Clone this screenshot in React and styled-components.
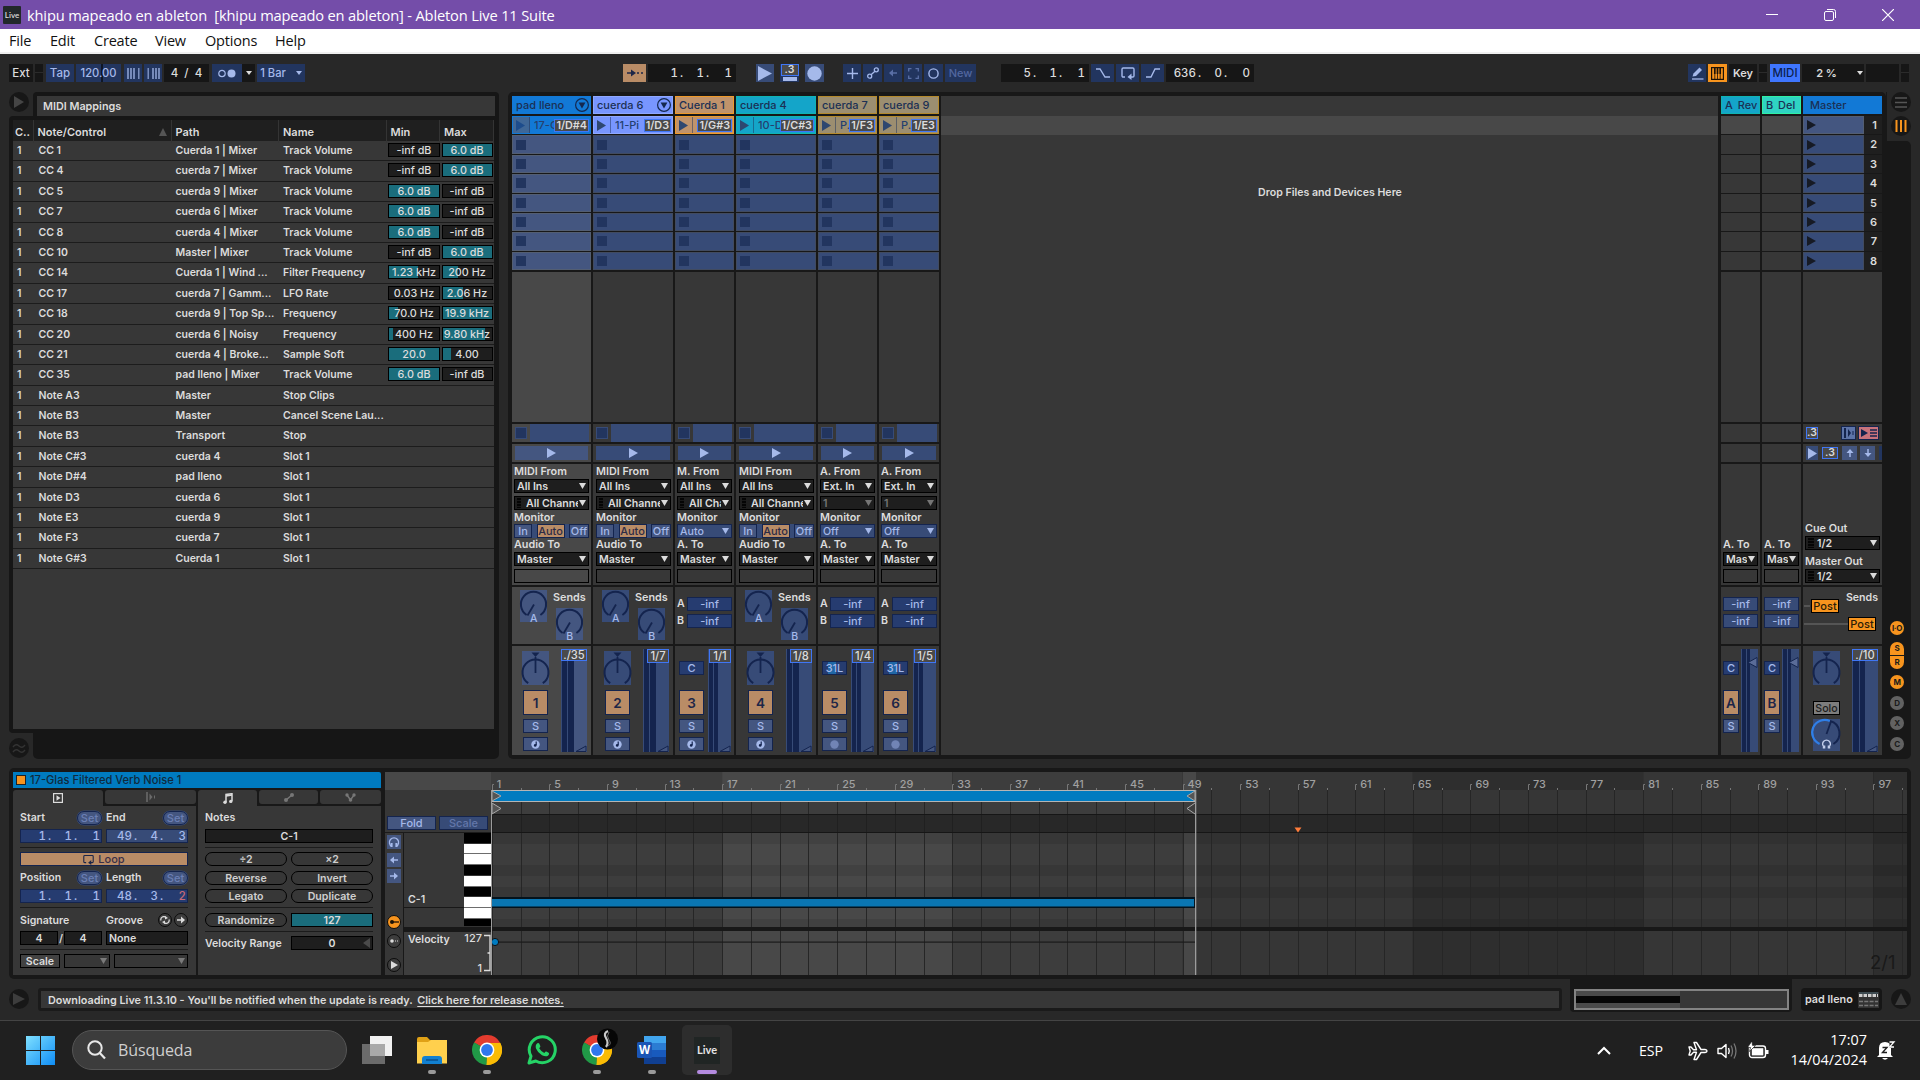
import React from "react";
import styled, { createGlobalStyle, css } from "styled-components";

const c = {
  bg: "#282828",
  dark: "#181818",
  panel: "#373737",
  panelSel: "#484848",
  field: "#1e1e1e",
  text: "#dcdcdc",
  navy: "#22355f",
  navyLine: "#14244e",
  blue: "#374b77",
  blueSel: "#445680",
  blueText: "#a5b9ea",
  link: "#3f76f5",
  tan: "#b98c66",
  teal: "#1a6d7c",
  orange: "#f7941e",
};

const Global = createGlobalStyle`
  * { box-sizing: border-box; }
  body { margin: 0; background: ${c.bg}; overflow: hidden; }
  svg { display: block; flex: none; }
`;

const App_ = styled.div`
  width: 1920px;
  height: 1080px;
  display: flex;
  flex-direction: column;
  background: ${c.bg};
  color: ${c.text};
  font: 600 10.6px/14px Inter, "Noto Sans", sans-serif;
  letter-spacing: 0;
  white-space: nowrap;
  overflow: hidden;
`;

/* ---------- window chrome ---------- */
const TitleBar = styled.header`
  height: 29px;
  flex: none;
  display: flex;
  align-items: center;
  background: #744da9;
  color: #fff;
  font: 400 14.66px/20px "Open Sans", "Noto Sans", sans-serif;
  letter-spacing: -0.16px;
  white-space: pre;
`;
const LiveBadge = styled.span`
  width: 18px;
  height: 18px;
  margin: 0 6px 0 3px;
  border-radius: 1px;
  background: #22282a;
  color: #ddd;
  font: 600 8px/18px Lato, sans-serif;
  text-align: center;
  letter-spacing: 0;
`;
const Caption = styled.span`
  width: 536px;
`;
const WindowButtons = styled.div`
  display: flex;
  margin-left: auto;
  padding-right: 26px;
  gap: 46px;
`;
const MenuBar = styled.nav`
  height: 25px;
  flex: none;
  display: flex;
  align-items: center;
  padding: 1px 0 0 9px;
  background: #fff;
  border-bottom: 2px solid #efefef;
  color: #111;
  font: 400 14.5px/20px "Open Sans", "Noto Sans", sans-serif;
  letter-spacing: -0.2px;
`;
const MenuItem = styled.span`
  width: ${(p) => p.$w}px;
`;

/* ---------- toolbar ---------- */
const Toolbar = styled.div`
  height: 18px;
  flex: none;
  display: flex;
  margin: 10px 0 10px 9px;
`;
const Cell = styled.div`
  width: ${(p) => p.$w}px;
  height: 18px;
  margin-left: ${(p) => p.$ml ?? 2}px;
  flex: none;
  display: flex;
  align-items: center;
  justify-content: center;
  background: ${(p) => p.$bg || "#161616"};
  color: ${(p) => p.$fg || c.text};
  font-weight: ${(p) => p.$weight || 500};
  font-size: ${(p) => p.$size || 11.5}px;
`;
const SplitCell = styled(Cell)`
  background: linear-gradient(#161616 8px, #2b2b2b 8px, #2b2b2b 9px, #161616 9px);
`;
const Tempo = styled(Cell)`
  background: linear-gradient(90deg, ${c.navy} 25px, #0f1726 25px, #0f1726 27px, ${c.navy} 27px);
`;
const Digits = styled.span`
  display: flex;
  justify-content: flex-end;
  gap: 2px;
  i { width: 4px; font-style: normal; text-align: left; }
`;
const Position = styled(Cell)`
  display: grid;
  grid-template-columns: 1fr 26px 22px;
  padding-right: 4px;
  font-variant-numeric: tabular-nums;
`;
const Counter = styled.span`
  border: 1.5px solid ${c.link};
  background: #4a4a4a;
  color: ${c.text};
  font-size: 10.5px;
  font-weight: 600;
  line-height: 10px;
  width: ${(p) => p.$w || 18}px;
  height: ${(p) => p.$h || 12}px;
  text-align: center;
  overflow: hidden;
`;
const CountCell = styled(Cell)`
  flex-direction: column;
  justify-content: flex-start;
  &::after {
    content: "";
    width: 14px;
    height: 4px;
    margin-top: 1px;
    background: ${c.blueText};
  }
`;

/* ---------- main area ---------- */
const Main = styled.div`
  height: 667px;
  flex: none;
  display: flex;
  gap: 9px;
  padding-left: 9px;
`;
const Browser = styled.section`
  width: 490px;
  display: flex;
  flex-direction: column;
`;
const BrowserTop = styled.div`
  height: 24px;
  display: flex;
  justify-content: space-between;
`;
const BrowserTitle = styled.div`
  width: 466px;
  padding: 4px 4px 0;
  background: #161616;
  border-radius: 4px 4px 0 0;
  div {
    height: 20px;
    padding-left: 6px;
    background: ${c.panel};
    font-size: 10.8px;
    line-height: 21px;
  }
`;
const TableFrame = styled.div`
  height: 617px;
  padding: 4px 5px 4px 4px;
  background: #161616;
  border-radius: 4px 0 0 4px;
`;
const Table = styled.div`
  height: 100%;
  background: ${c.panel};
`;
const gridCols = css`
  display: grid;
  grid-template-columns: 20.5px 138px 107.5px 107.5px 53.5px 54px;
`;
const HeadRow = styled.div`
  ${gridCols}
  height: 21px;
  background: #1f1f1f;
  line-height: 22px;
  font-size: 11px;
  span {
    padding: 1px 0 0 4px;
    border-right: 1px solid #343434;
    display: flex;
    align-items: center;
    justify-content: space-between;
  }
  span:first-child { padding-left: 2px; }
`;
const Row = styled.div`
  ${gridCols}
  height: 20.4px;
  border-bottom: 1px solid #1c1c1c;
  line-height: 20.4px;
  font-size: 10.5px;
  > span {
    padding-left: 4px;
    overflow: hidden;
  }
  > span:nth-child(2) { padding-left: 5px; }
`;
const Value = styled.div`
  width: ${(p) => p.$w || 52}px;
  height: 14px;
  margin: 2px 0 0 1.5px;
  border: 1px solid #000;
  text-align: center;
  line-height: 13.5px;
  font-weight: 500;
  font-size: 10.8px;
  background: linear-gradient(90deg, ${c.teal} ${(p) => p.$fill}%, ${c.field} ${(p) => p.$fill}%);
`;
const BrowserBottom = styled.div`
  height: 26px;
  display: flex;
  justify-content: space-between;
  align-items: flex-start;
`;
const PreviewBar = styled.div`
  width: 466px;
  height: 26px;
  background: #161616;
  border-radius: 0 0 5px 5px;
`;
const Round = styled.span`
  width: 20px;
  height: 20px;
  margin-top: ${(p) => p.$mt || 0}px;
  display: flex;
  align-items: center;
  justify-content: center;
  border-radius: 50%;
  background: #171717;
`;

/* ---------- session ---------- */
const Session = styled.section`
  display: flex;
`;
const Tracks = styled.div`
  width: 1378px;
  display: flex;
  gap: 2px;
  padding: 4px 4px 0;
  background: ${c.dark};
  border-radius: 5px 5px 0 5px;
`;
const Column = styled.div`
  width: ${(p) => p.$w}px;
  flex: none;
  display: flex;
  flex-direction: column;
  gap: 2px;
  margin-left: ${(p) => p.$ml || 0}px;
`;
const TrackHead = styled.div`
  height: 18px;
  flex: none;
  display: flex;
  align-items: center;
  justify-content: space-between;
  padding: 0 0 0 3px;
  background: ${(p) => p.$bg};
  border: 1px solid ${(p) => p.$line || p.$bg};
  color: #1b3054;
  font-weight: 500;
  font-size: 11px;
`;
const Slots = styled.div`
  height: 154px;
  flex: none;
  display: grid;
  grid-template-rows: repeat(8, minmax(0, 1fr));
  gap: 1px;
`;
const Slot = styled.div`
  display: flex;
  align-items: center;
  padding-left: 3px;
  border: 1px solid ${(p) => (p.$sel ? "#535e72" : "#414b60")};
  background: ${(p) => (p.$sel ? c.blueSel : c.blue)};
  &::before {
    content: "";
    width: 10px;
    height: 10px;
    background: ${c.navy};
  }
`;
const Clip = styled.div`
  display: flex;
  overflow: hidden;
  background: ${(p) => p.$bg};
  border: 1px solid ${(p) => p.$line || p.$bg};
  color: #24406f;
  font-weight: 500;
  font-size: 11px;
  line-height: 17px;
`;
const ClipPlay = styled.span`
  width: 17px;
  flex: none;
  display: flex;
  align-items: center;
  padding-left: 3px;
  margin-right: ${(p) => p.$mr}px;
  background: ${(p) => p.$bg};
  border-right: 1px solid rgba(30, 50, 90, 0.5);
`;
const ClipName = styled.span`
  flex: 1;
  min-width: 0;
  overflow: hidden;
`;
const NoteBadge = styled.span`
  flex: none;
  height: 13px;
  margin: 2px 1px 0 0;
  padding: 0 1px;
  border: 1px solid ${c.link};
  background: #4a4a4a;
  color: ${c.text};
  font-weight: 600;
  font-size: 10.8px;
  line-height: 11px;
`;
const ReturnSlot = styled.div`
  background: ${(p) => (p.$hi ? c.panelSel : c.panel)};
`;
const SceneSlot = styled.div`
  display: flex;
  justify-content: space-between;
  background: #1f1f1f;
  font-size: 11px;
  line-height: 19px;
  padding-right: 5px;
`;
const SceneName = styled.div`
  width: 61px;
  display: flex;
  align-items: center;
  padding-left: 3px;
  border: 1px solid ${(p) => (p.$sel ? "#535e72" : "#414b60")};
  background: ${(p) => (p.$sel ? c.blueSel : c.blue)};
`;
const Section = styled.div`
  height: ${(p) => p.$h}px;
  flex: none;
  background: ${(p) => (p.$sel ? c.panelSel : c.panel)};
  overflow: hidden;
`;
const StopRow = styled(Section)`
  display: flex;
  align-items: center;
  justify-content: space-between;
  padding: 0 2px 0 3px;
`;
const StopBox = styled.i`
  width: 12px;
  height: 12px;
  background: ${c.navy};
  border: 1px solid ${c.blue};
`;
const StopBar = styled.i`
  width: ${(p) => p.$w}px;
  height: 18px;
  background: ${c.blue};
`;
const PlayRow = styled(Section)`
  padding: 2px 3px;
  div {
    height: 14px;
    display: flex;
    align-items: center;
    justify-content: center;
    background: ${(p) => (p.$sel ? c.blueSel : c.blue)};
  }
`;
const IO = styled(Section)`
  padding: 0 2px 0 ${(p) => p.$pl || 2}px;
  display: flex;
  flex-direction: column;
`;
const Label = styled.div`
  height: ${(p) => p.$h || 14}px;
  margin-top: ${(p) => p.$mt || 0}px;
  flex: none;
  line-height: ${(p) => p.$lh || 15}px;
  font-size: 10.8px;
`;
const Select_ = styled.div`
  height: 14px;
  margin-bottom: ${(p) => p.$mb || 0}px;
  flex: none;
  display: flex;
  align-items: center;
  gap: 1px;
  padding: 0 2px;
  border: 1px solid ${(p) => (p.$blue ? c.navyLine : "#000")};
  background: ${(p) => (p.$blue ? c.blue : c.field)};
  color: ${(p) => (p.$blue ? c.blueText : p.$dim ? "#757575" : c.text)};
  font-weight: ${(p) => (p.$blue ? 500 : 600)};
  line-height: 13px;
  span { flex: 1; min-width: 0; overflow: hidden; }
`;
const PipeCol = styled.i`
  width: ${(p) => p.$w || 4}px;
  height: 10px;
  margin-right: ${(p) => (p.$w > 4 ? 2 : 4)}px;
  flex: none;
  background: repeating-linear-gradient(#050505 0 2px, #191919 2px 3px);
`;
const Monitor = styled.div`
  height: 14px;
  display: flex;
  justify-content: space-between;
  background: ${c.blue};
`;
const MonBtn = styled.span`
  width: ${(p) => p.$w}px;
  height: 14px;
  border: 1px solid ${c.navyLine};
  background: ${(p) => (p.$on ? c.tan : c.blueSel)};
  color: ${(p) => (p.$on ? "#2d2b45" : c.blueText)};
  font-weight: 500;
  font-size: 11px;
  text-align: center;
  line-height: 13px;
`;
const Activity = styled.div`
  height: 14px;
  margin-top: 3px;
  border: 1px solid #000;
`;
const SendsWide = styled(Section)`
  display: flex;
  gap: 9px;
  padding: 3px 0 0 ${(p) => p.$pl}px;
`;
const SendRight = styled.div`
  width: 36px;
  display: flex;
  flex-direction: column;
  b { font-weight: 600; font-size: 10.8px; height: 18px; line-height: 15px; margin-left: -3px; }
`;
const SendsSlim = styled(Section)`
  display: flex;
  flex-direction: column;
  gap: 3px;
  padding: 10px 2px 0;
`;
const SendLine = styled.div`
  display: flex;
  justify-content: space-between;
`;
const BlueField = styled.div`
  width: ${(p) => p.$w}px;
  height: 14px;
  flex: none;
  display: flex;
  align-items: center;
  justify-content: center;
  border: 1px solid ${c.navyLine};
  background: ${(p) => p.$bg || c.blueSel};
  color: ${(p) => (p.$dim ? "#6377aa" : c.blueText)};
  font-weight: 500;
  font-size: 11px;
  line-height: 13px;
`;
const Mixer = styled(Section)`
  display: flex;
  justify-content: space-between;
  padding: 3px ${(p) => p.$pr}px 0 ${(p) => p.$pl}px;
`;
const Strip = styled.div`
  display: flex;
  flex-direction: column;
  align-items: center;
`;
const PanSpace = styled.div`
  height: 41px;
  padding-top: ${(p) => p.$pt}px;
`;
const TrackNumber = styled.div`
  width: ${(p) => p.$w || 25}px;
  height: 25px;
  margin-bottom: 4px;
  border: 1px solid ${c.navyLine};
  background: ${c.tan};
  color: #1d2648;
  font-weight: 600;
  font-size: 13.5px;
  line-height: 24px;
  text-align: center;
`;
const Gap = styled.i`
  height: ${(p) => p.$h || 1}px;
  width: ${(p) => p.$w || 1}px;
  flex: none;
`;
const Meter = styled.div`
  position: relative;
  width: ${(p) => p.$w}px;
  height: 103px;
  background: linear-gradient(
    90deg,
    ${c.blue} 1px,
    ${c.navyLine} 1px ${(p) => p.$a}px,
    ${c.blue} ${(p) => p.$a}px ${(p) => p.$a + 1}px,
    ${c.navyLine} ${(p) => p.$a + 1}px ${(p) => p.$b}px,
    ${(p) => (p.$sel ? c.blueSel : c.blue)} ${(p) => p.$b}px
  );
`;
const MeterHandle = styled.svg`
  position: absolute;
  right: 0;
  ${(p) => (p.$top ? "top: 8px;" : "bottom: 0;")}
`;
const MeterBadge = styled.span`
  position: absolute;
  right: 0;
  top: 0;
  height: ${(p) => (p.$tall ? 14 : 12)}px;
  width: ${(p) => p.$w}px;
  border: 1px solid ${c.link};
  background: #4a4a4a;
  font-weight: 500;
  font-size: 11.2px;
  line-height: ${(p) => (p.$tall ? 13 : 11)}px;
  text-align: center;
`;
const DropArea = styled.div`
  width: 777px;
  height: 659px;
  background: linear-gradient(${c.panel} 20px, ${c.panelSel} 20px 39px, ${c.panel} 39px);
  padding: 90px 0 0 1px;
  text-align: center;
`;
const SceneTools = styled(Section)`
  display: flex;
  align-items: center;
  padding-left: 3px;
`;
const Tile = styled.span`
  width: ${(p) => p.$w}px;
  height: 14px;
  margin-left: ${(p) => p.$ml || 0}px;
  flex: none;
  display: flex;
  align-items: center;
  justify-content: center;
  border: ${(p) => (p.$line ? "1px solid " + c.navyLine : "0")};
  background: ${(p) => p.$bg || c.blueSel};
`;
const MasterSends = styled(Section)`
  position: relative;
  padding: 4px 4px 0 0;
  text-align: right;
`;
const Post = styled.span`
  position: absolute;
  left: ${(p) => p.$x}px;
  top: ${(p) => p.$y}px;
  width: 28px;
  height: 14px;
  border: 1px solid #000;
  background: ${c.orange};
  color: #2a1c08;
  font-weight: 500;
  font-size: 11px;
  line-height: 13px;
  text-align: center;
`;
const Wire = styled.i`
  position: absolute;
  left: 1px;
  top: ${(p) => p.$y}px;
  width: ${(p) => p.$w}px;
  height: 2px;
  background: #555;
`;
const Solo = styled.div`
  width: 27px;
  height: 14px;
  margin-bottom: 4px;
  flex: none;
  border: 1px solid #000;
  background: #7d7d7d;
  color: #1c1c1c;
  font-weight: 500;
  line-height: 13px;
  text-align: center;
`;
const Rail = styled.div`
  width: 25px;
  display: flex;
  flex-direction: column;
`;
const RailTop = styled.div`
  height: 49px;
  padding-left: 5px;
  display: flex;
  flex-direction: column;
  gap: 4px;
  background: linear-gradient(90deg, ${c.dark} 1px, ${c.bg} 1px);
`;
const RailBody = styled.div`
  flex: 1;
  padding: 480px 0 0 4px;
  background: ${c.dark};
  border-radius: 0 5px 5px 0;
`;
const Toggle = styled.div`
  width: 14px;
  height: ${(p) => p.$h || 14}px;
  margin-bottom: ${(p) => p.$mb ?? 6.5}px;
  border-radius: ${(p) => p.$r || "7px"};
  background: ${(p) => (p.$on ? c.orange : "#626262")};
  color: #1b1b1b;
  font-size: 8px;
  font-weight: 700;
  line-height: ${(p) => p.$h || 14}px;
  text-align: center;
  letter-spacing: -0.3px;
`;

/* ---------- clip view ---------- */
const ClipView = styled.section`
  width: 1902px;
  height: 211px;
  flex: none;
  display: flex;
  margin: 9px 0 0 9px;
  padding: 4px;
  background: ${c.dark};
  border-radius: 5px;
`;
const ClipProps = styled.div`
  width: 368px;
  margin-right: 4px;
  display: flex;
  flex-direction: column;
`;
const ClipTitle = styled.div`
  height: 16px;
  margin-bottom: 2px;
  display: flex;
  align-items: center;
  gap: 4px;
  padding-left: 3px;
  background: #007bc0;
  color: #102a3d;
  font-weight: 500;
  font-size: 11.1px;
  line-height: 17px;
  border-radius: 0 2px 0 0;
  i { width: 10px; height: 10px; background: ${c.orange}; border: 1px solid #222; }
`;
const Panes = styled.div`
  display: flex;
  gap: 2px;
`;
const Pane = styled.div`
  width: 183px;
  height: 185px;
  background: ${c.panel};
  border-radius: 3px 3px 0 0;
`;
const Tabs = styled.div`
  height: 16px;
  display: flex;
  background: ${c.dark};
`;
const Tab = styled.div`
  width: ${(p) => p.$w}px;
  height: ${(p) => (p.$on ? 16 : 14)}px;
  margin-left: ${(p) => p.$ml || 0}px;
  display: flex;
  align-items: center;
  justify-content: center;
  background: ${c.panel};
  border-radius: ${(p) => (p.$on ? "3px 3px 0 0" : "3px")};
`;
const PaneBody = styled.div`
  padding: 4px 8px 0 7px;
`;
const Line = styled.div`
  height: ${(p) => p.$h || 14}px;
  margin-top: ${(p) => p.$mt || 0}px;
  display: flex;
  justify-content: space-between;
  align-items: center;
  line-height: 15px;
`;
const Half = styled.div`
  width: 82px;
  display: flex;
  justify-content: space-between;
  align-items: center;
`;
const Duo = styled.div`
  display: flex;
  gap: 2px;
`;
const Rule = styled.div`
  height: 1px;
  margin-top: 4px;
  background: #1b1b1b;
`;
const SetPill = styled.span`
  width: 25px;
  height: 14px;
  border: 1px solid ${c.navyLine};
  border-radius: 7px;
  background: ${c.blueSel};
  box-shadow: 0 0 0 0.5px ${c.blue};
  color: #6b7fb4;
  font-weight: 500;
  font-size: 11px;
  text-align: center;
  line-height: 13px;
`;
const NumField = styled.div`
  width: 82px;
  height: 14px;
  display: grid;
  grid-template-columns: 1fr 26px 22px;
  padding-right: 1px;
  border: 1px solid ${c.navyLine};
  background: ${(p) => (p.$hi ? c.blue : "#263c70")};
  color: ${c.blueText};
  font-weight: 500;
  font-size: 11.5px;
  line-height: 13px;
  font-variant-numeric: tabular-nums;
  em { font-style: normal; text-align: right; color: #c76a77; }
`;
const LoopBtn = styled.div`
  height: 14px;
  margin-top: 4px;
  display: flex;
  align-items: center;
  justify-content: center;
  gap: 4px;
  border: 1px solid ${c.navyLine};
  background: ${c.tan};
  color: #3a2f47;
  font-weight: 500;
  font-size: 11px;
`;
const Field = styled.div`
  width: ${(p) => p.$w}px;
  height: 14px;
  display: flex;
  align-items: center;
  justify-content: ${(p) => p.$align || "center"};
  padding: 0 2px;
  border: 1px solid #000;
  background: ${(p) => p.$bg || c.field};
  line-height: 13px;
`;
const Pill = styled(Field)`
  border-radius: 7px;
  background: ${c.panel};
  color: #cfcfcf;
`;
const MiniRound = styled.span`
  width: 14px;
  height: 14px;
  flex: none;
  display: flex;
  align-items: center;
  justify-content: center;
  border: 1px solid #0c0c0c;
  border-radius: 50%;
  background: ${(p) => p.$bg || "#3d3d3d"};
`;
const RollSide = styled.div`
  width: 106px;
  background: ${c.panel};
  display: flex;
  flex-direction: column;
`;
const RollTop = styled.div`
  height: 61px;
  flex: none;
  display: flex;
  align-items: flex-end;
  gap: 3px;
  padding: 0 0 2px 2px;
  background: linear-gradient(${c.panelSel} 18px, ${c.panel} 18px);
  border-bottom: 1px solid #1b1b1b;
`;
const RollLower = styled.div`
  flex: 1;
  display: flex;
`;
const RollTools = styled.div`
  width: 19px;
  display: flex;
  flex-direction: column;
  align-items: center;
  padding-top: 2px;
  border-right: 1px solid #181818;
`;
const KeysWrap = styled.div`
  flex: 1;
  display: flex;
  flex-direction: column;
`;
const KeysRow = styled.div`
  height: 94px;
  display: flex;
  justify-content: space-between;
`;
const KeyLabel = styled.div`
  flex: 1;
  padding: 60px 0 0 4px;
  background: linear-gradient(transparent 74px, #181818 74px 75px, transparent 75px);
`;
const Keys = styled.div`
  width: 27px;
  display: flex;
  flex-direction: column;
`;
const PianoKey = styled.i`
  height: ${(p) => p.$h}px;
  background: ${(p) => (p.$black ? "#000" : "#fff")};
  border-bottom: 1px solid ${(p) => (p.$black ? "#333" : "#6d6d6d")};
`;
const VelocitySide = styled.div`
  height: 43px;
  margin-top: 5px;
  display: flex;
  justify-content: space-between;
  padding: 1px 0 0 4px;
  background: #3e3e3e;
  box-shadow: 0 -5px 0 ${c.dark};
`;
const Scale = styled.div`
  display: flex;
  gap: 2px;
  font-weight: 500;
  font-size: 11px;
  div { display: flex; flex-direction: column; justify-content: space-between; text-align: right; height: 41px; line-height: 11px; }
`;

/* ---------- status ---------- */
const Status = styled.div`
  height: 41px;
  flex: none;
  display: flex;
  padding-left: 9px;
`;
const StatusText = styled.div`
  width: 1524px;
  height: 23px;
  margin: 9px 0 0 9px;
  padding-left: 7px;
  border: 3px solid #1a1a1a;
  border-radius: 3px;
  background: ${c.panel};
  font-size: 10.84px;
  line-height: 18px;
  u { margin-left: 2px; text-underline-offset: 2px; }
`;
const Overview = styled.div`
  width: 222px;
  height: 33px;
  margin-left: 8px;
  padding: 10px 3px 0 4px;
  background: ${c.dark};
  border-radius: 0 0 4px 4px;
`;
const OverviewFrame = styled.div`
  height: 21px;
  border: 2px solid #838383;
  background: linear-gradient(90deg, #4a4a4a 104px, ${c.panel} 104px);
  padding-top: 5px;
  &::before { content: ""; display: block; width: 104px; height: 7px; background: #060606; }
`;
const TrackTag = styled.div`
  width: 81px;
  height: 23px;
  margin: 9px 0 0 9px;
  display: flex;
  align-items: center;
  justify-content: space-between;
  padding: 1px 3px 0 4px;
  border-radius: 4px;
  background: #161616;
  font-size: 10.8px;
`;

/* ---------- taskbar ---------- */
const Taskbar = styled.footer`
  height: 60px;
  flex: none;
  display: flex;
  background: #202020;
  border-top: 1px solid #444;
  font-family: "Open Sans", "Noto Sans", sans-serif;
  color: #fff;
`;
const Start = styled.div`
  width: 72px;
  padding: 15px 0 0 26px;
`;
const Search = styled.div`
  width: 275px;
  height: 40px;
  margin-top: 9px;
  display: flex;
  align-items: center;
  gap: 12px;
  padding: 0 0 0 14px;
  border: 1px solid #555;
  border-radius: 20px;
  background: #3c3c3c;
  color: #d0d0d0;
  font-size: 16px;
  font-weight: 400;
  letter-spacing: -0.1px;
`;
const TaskIcons = styled.div`
  display: flex;
  gap: 5px;
  padding: 4px 0 0 5px;
`;
const Task = styled.div`
  width: 50px;
  height: 50px;
  display: flex;
  flex-direction: column;
  align-items: center;
  padding-top: 10px;
  border-radius: 5px;
  background: ${(p) => (p.$active ? "#2d2d2d" : "transparent")};
  &::after {
    content: "";
    width: ${(p) => (p.$active ? 20 : p.$open ? 8 : 0)}px;
    height: 4px;
    margin-top: 5px;
    border-radius: 2px;
    background: ${(p) => (p.$active ? "#b48be0" : "#9a9a9a")};
  }
`;
const LiveIcon = styled.span`
  width: 26px;
  height: 27px;
  margin: 1.5px 0;
  background: #202524;
  color: #e4e4e4;
  font: 700 11px/26px Lato, sans-serif;
  text-align: center;
`;
const Tray = styled.div`
  margin-left: auto;
  display: flex;
  align-items: center;
  padding-right: 23px;
  font-weight: 400;
`;
const Lang = styled.span`
  width: 49px;
  font-size: 14.2px;
  letter-spacing: -0.1px;
`;
const Clock = styled.div`
  width: 98px;
  margin-right: 10px;
  padding-bottom: 1px;
  text-align: right;
  line-height: 20px;
  font-size: 14.4px;
`;

/* ---------- icons ---------- */
const Svg = ({ w, h, children, ...rest }) => (
  <svg width={w} height={h} viewBox={`0 0 ${w} ${h}`} fill="none" {...rest}>
    {children}
  </svg>
);
const Tri = ({ color = c.text, w = 9, h = 10 }) => (
  <Svg w={w} h={h}><path d={`M0 0L${w} ${h / 2}L0 ${h}Z`} fill={color} /></Svg>
);
const Caret = ({ color = c.text, w = 7, h = 6 }) => (
  <Svg w={w} h={h}><path d={`M0 0H${w}L${w / 2} ${h}Z`} fill={color} /></Svg>
);
const turns = { right: 0, down: 90, left: 180, up: 270 };
const ArrowIcon = ({ dir = "right", color = c.blueText }) => (
  <Svg w={10} h={10}>
    <g transform={`rotate(${turns[dir]} 5 5)`}>
      <path d="M1 5H8" stroke={color} strokeWidth="1.5" />
      <path d="M5 1.5L9 5L5 8.5Z" fill={color} />
    </g>
  </Svg>
);
const LoopIcon = ({ color, w = 14, h = 14 }) => (
  <svg width={w} height={h} viewBox="0 0 14 14" fill="none">
    <path d="M4 11H2.2Q1 11 1 9.8V3.2Q1 2 2.2 2H11.8Q13 2 13 3.2V9.8Q13 11 11.8 11H9" stroke={color} strokeWidth="1.4" />
    <path d="M10.5 7.5L6.5 11L10.5 14Z" fill={color} />
  </svg>
);
const Headphones = ({ color = c.blueText, s = 12 }) => (
  <svg width={s} height={s} viewBox="0 0 12 12" fill="none">
    <path d="M3.8 10.5A4.6 4.6 0 1 1 8.2 10.5" stroke={color} strokeWidth="1.3" />
    <rect x="2.6" y="7" width="2" height="4" fill={color} /><rect x="7.4" y="7" width="2" height="4" fill={color} />
  </svg>
);
const SendKnob = ({ letter, sel }) => (
  <svg width="27" height="32" viewBox="0 0 27 32" overflow="visible">
    <rect width="27" height="32" fill={sel ? c.blueSel : c.blue} />
    <path d="M6.6 25A12.6 12.6 0 1 1 20.4 25" stroke={c.navyLine} strokeWidth="2" fill="none" />
    <path d="M14 14.5L7.5 25.5" stroke={c.navyLine} strokeWidth="1.8" />
    <text x="13.7" y="31.8" textAnchor="middle" fontSize="10.5" fontWeight="500" fill={c.blueText}>{letter}</text>
  </svg>
);
const PanKnob = ({ sel }) => (
  <svg width="27" height="34" viewBox="0 0 27 34" overflow="visible">
    <rect width="27" height="34" fill={sel ? c.blueSel : c.blue} />
    <path d="M9.5 1.5H17.5L13.5 6Z" fill={c.navyLine} />
    <path d="M6.2 32.2A13 13 0 1 1 20.8 32.2" stroke={c.navyLine} strokeWidth="2" fill="none" />
    <path d="M13.5 6V22" stroke={c.navyLine} strokeWidth="1.8" />
  </svg>
);
const CueKnob = () => (
  <svg width="27" height="32" viewBox="0 0 27 32" overflow="visible">
    <rect width="27" height="32" fill={c.blue} />
    <path d="M6.6 25A12.6 12.6 0 0 1 17 2" stroke="#2f7fe8" strokeWidth="2.2" fill="none" />
    <path d="M17 2A12.6 12.6 0 0 1 20.4 25" stroke={c.navyLine} strokeWidth="2" fill="none" />
    <path d="M13.5 15L18 2.5" stroke={c.navyLine} strokeWidth="1.8" />
    <path d="M9.8 28.8H11.6V26.6M17.2 28.8H15.4V26.6M11.6 28.4A3.9 3.9 0 1 1 15.4 28.4" stroke="#c2cdea" strokeWidth="1.4" fill="none" />
  </svg>
);
const ArmIcon = ({ midi }) =>
  midi ? (
    <Svg w={9} h={9}><circle cx="4.5" cy="4.5" r="4.2" fill={c.blueText} /><path d="M5.2 1.6V5.2" stroke={c.navyLine} strokeWidth="1.2" /><circle cx="4.2" cy="5.4" r="1.3" fill={c.navyLine} /></Svg>
  ) : (
    <Svg w={9} h={9}><circle cx="4.5" cy="4.5" r="4.2" fill="#7184b5" /></Svg>
  );
const NudgeBars = ({ flip }) => (
  <Svg w={13} h={11}>
    <g transform={flip ? "translate(13 0) scale(-1 1)" : undefined} stroke={c.blueText} strokeWidth="1.3">
      <path d="M1 0V11M4 0V11M7 0V11" />
      <path d="M11.8 0V11" opacity=".8" />
    </g>
  </Svg>
);
const Automation = ({ color }) => (
  <Svg w={12} h={12}><circle cx="9.3" cy="2.8" r="2" stroke={color} strokeWidth="1.3" /><circle cx="2.7" cy="9.2" r="2" stroke={color} strokeWidth="1.3" /><path d="M4 7.8L8 4.2" stroke={color} strokeWidth="1.3" /></Svg>
);
const Chrome = () => (
  <svg width="30" height="30" viewBox="0 0 30 30">
    <path d="M15 15L2 7.5A15 15 0 0 1 28 7.5Z" fill="#e33b2e" />
    <path d="M15 15L28 7.5A15 15 0 0 1 15 30L14 29.9Z" fill="#fbbc05" />
    <path d="M15 15L14.5 30A15 15 0 0 1 2 7.5Z" fill="#219a47" />
    <path d="M15 8H28.2A15 15 0 0 1 15 30L21 18.5Z" fill="#fbbc05" />
    <path d="M2 7.5L9 18.5L15 15Z" fill="#219a47" />
    <circle cx="15" cy="15" r="7.4" fill="#fff" />
    <circle cx="15" cy="15" r="5.9" fill="#2f77ee" />
  </svg>
);

/* ---------- data ---------- */
const mappings = [
  ["CC 1", "Cuerda 1 | Mixer", "Track Volume", ["-inf dB", 0], ["6.0 dB", 100]],
  ["CC 4", "cuerda 7 | Mixer", "Track Volume", ["-inf dB", 0], ["6.0 dB", 100]],
  ["CC 5", "cuerda 9 | Mixer", "Track Volume", ["6.0 dB", 100], ["-inf dB", 0]],
  ["CC 7", "cuerda 6 | Mixer", "Track Volume", ["6.0 dB", 100], ["-inf dB", 0]],
  ["CC 8", "cuerda 4 | Mixer", "Track Volume", ["6.0 dB", 100], ["-inf dB", 0]],
  ["CC 10", "Master | Mixer", "Track Volume", ["-inf dB", 0], ["6.0 dB", 100]],
  ["CC 14", "Cuerda 1 | Wind ...", "Filter Frequency", ["1.23 kHz", 58], ["200 Hz", 30]],
  ["CC 17", "cuerda 7 | Gamm...", "LFO Rate", ["0.03 Hz", 0], ["2.06 Hz", 41]],
  ["CC 18", "cuerda 9 | Top Sp...", "Frequency", ["70.0 Hz", 17], ["19.9 kHz", 100]],
  ["CC 20", "cuerda 6 | Noisy", "Frequency", ["400 Hz", 7], ["9.80 kHz", 86]],
  ["CC 21", "cuerda 4 | Broke...", "Sample Soft", ["20.0", 100], ["4.00", 16]],
  ["CC 35", "pad lleno | Mixer", "Track Volume", ["6.0 dB", 100], ["-inf dB", 0]],
  ["Note A3", "Master", "Stop Clips"],
  ["Note B3", "Master", "Cancel Scene Lau..."],
  ["Note B3", "Transport", "Stop"],
  ["Note C#3", "cuerda 4", "Slot 1"],
  ["Note D#4", "pad lleno", "Slot 1"],
  ["Note D3", "cuerda 6", "Slot 1"],
  ["Note E3", "cuerda 9", "Slot 1"],
  ["Note F3", "cuerda 7", "Slot 1"],
  ["Note G#3", "Cuerda 1", "Slot 1"],
];

const tracks = [
  { n: 1, name: "pad lleno", w: 79, bg: "#1279d6", playBg: "#3f6797", clip: "17-G", note: "1/D#4", sel: true, fold: true, cc: "./35", midi: true },
  { n: 2, name: "cuerda 6", w: 80, bg: "#7896ff", line: "#8fa8ff", clip: "11-Pi", note: "1/D3", fold: true, cc: "1/7", midi: true },
  { n: 3, name: "Cuerda 1", w: 59, bg: "#c0936b", line: "#f09a2a", clip: "", note: "1/G#3", cc: "1/1", midi: true, slim: true, pan: "C" },
  { n: 4, name: "cuerda 4", w: 80, bg: "#14a5c9", line: "#10b4b4", clip: "10-D", note: "1/C#3", cc: "1/8", midi: true },
  { n: 5, name: "cuerda 7", w: 59, bg: "#9c8e70", line: "#b58a2c", clip: "P.", note: "1/F3", cc: "1/4", slim: true, pan: "31L" },
  { n: 6, name: "cuerda 9", w: 60, bg: "#9c8e70", line: "#b58a2c", clip: "P.", note: "1/E3", cc: "1/5", slim: true, pan: "31L" },
];

const Dropdown = ({ children, pipe, ...p }) => (
  <Select_ {...p}>
    {pipe && <PipeCol $w={pipe} />}
    <span>{children}</span>
    <Caret color={p.$blue ? c.blueText : p.$dim ? "#757575" : c.text} />
  </Select_>
);

function Track({ t }) {
  const wide = t.w === 80;
  return (
    <Column $w={t.w}>
      <TrackHead $bg={t.bg} $line={t.line}>
        {t.name}
        {t.fold && (
          <Svg w={16} h={16}><circle cx="8" cy="8" r="6.4" stroke="#14284f" strokeWidth="1.2" /><path d="M4.6 5.5H11.4L8 11.5Z" fill="#14284f" /></Svg>
        )}
      </TrackHead>
      <Slots>
        <Clip $bg={t.bg} $line={t.line}>
          <ClipPlay $bg={t.playBg} $mr={t.clip ? 4 : 0}><Tri w={9} h={11} color={t.sel ? "#1d4c8c" : "#2e4770"} /></ClipPlay>
          <ClipName>{t.clip}</ClipName>
          <NoteBadge>{t.note}</NoteBadge>
        </Clip>
        {[2, 3, 4, 5, 6, 7, 8].map((i) => <Slot key={i} $sel={t.sel} />)}
      </Slots>
      <Section $h={150} $sel={t.sel} />
      <StopRow $h={18} $sel={t.sel}><StopBox /><StopBar $w={t.w - 20} /></StopRow>
      <PlayRow $h={18} $sel={t.sel}><div><Tri color={c.blueText} /></div></PlayRow>
      <IO $h={121} $sel={t.sel} $pl={wide ? 3 : 2}>
        <Label $h={15}>{!t.midi ? "A. From" : t.slim ? "M. From" : "MIDI From"}</Label>
        <Dropdown $mb={3}>{t.midi ? "All Ins" : "Ext. In"}</Dropdown>
        {t.midi ? <Dropdown pipe={4}>All Channels</Dropdown> : <Dropdown $dim>1</Dropdown>}
        <Label>Monitor</Label>
        {t.slim ? (
          <Dropdown $blue>{t.midi ? "Auto" : "Off"}</Dropdown>
        ) : (
          <Monitor><MonBtn $w={18}>In</MonBtn><MonBtn $w={28} $on>Auto</MonBtn><MonBtn $w={20}>Off</MonBtn></Monitor>
        )}
        <Label $lh={14}>{t.slim ? "A. To" : "Audio To"}</Label>
        <Dropdown>Master</Dropdown>
        <Activity />
      </IO>
      {t.slim ? (
        <SendsSlim $h={57}>
          <SendLine>A<BlueField $w={45} $bg="#263c70">-inf</BlueField></SendLine>
          <SendLine>B<BlueField $w={45} $bg="#263c70">-inf</BlueField></SendLine>
        </SendsSlim>
      ) : (
        <SendsWide $h={57} $sel={t.sel} $pl={wide ? 9 : 8}>
          <SendKnob letter="A" sel={t.sel} />
          <SendRight><b>Sends</b><SendKnob letter="B" sel={t.sel} /></SendRight>
        </SendsWide>
      )}
      <Mixer $h={109} $sel={t.sel} $pl={t.slim ? 4 : wide ? 11 : 10} $pr={t.slim ? 3 : 4}>
        <Strip>
          <PanSpace $pt={t.slim ? 12 : 2}>
            {t.slim ? <BlueField $w={25} $bg={t.pan === "C" ? "#263c70" : "linear-gradient(90deg,#263c70 5px,#2067a5 5px 13px,#263c70 13px)"}>{t.pan}</BlueField> : <PanKnob sel={t.sel} />}
          </PanSpace>
          <TrackNumber>{t.n}</TrackNumber>
          <BlueField $w={25}>S</BlueField>
          <Gap $h={4} />
          <BlueField $w={25}><ArmIcon midi={t.midi} /></BlueField>
        </Strip>
        <Meter $w={t.slim ? 23 : 26} $a={t.slim ? 5 : 6} $b={t.slim ? 10 : 13} $sel={t.sel}>
          <MeterBadge $w={t.n === 1 ? 26 : 22} $tall={t.n !== 1}>{t.cc}</MeterBadge>
          <MeterHandle width="12" height="7" viewBox="0 0 12 7"><path d="M1 6.5L11 1V6.5Z" fill={c.blueSel} stroke={c.navyLine} /></MeterHandle>
        </Meter>
      </Mixer>
    </Column>
  );
}

function ReturnTrack({ letter, name, bg, line, ml }) {
  return (
    <Column $w={39} $ml={ml}>
      <TrackHead $bg={bg} $line={line}><span>{letter}&nbsp;&thinsp;{name}</span></TrackHead>
      <Slots>{[1, 2, 3, 4, 5, 6, 7, 8].map((i) => <ReturnSlot key={i} $hi={i === 1} />)}</Slots>
      <Section $h={150} />
      <Section $h={18} />
      <Section $h={18} />
      <IO $h={121}>
        <Gap $h={74} />
        <Label $lh={14}>A. To</Label>
        <Dropdown>Mas</Dropdown>
        <Activity />
      </IO>
      <SendsSlim $h={57}><BlueField $w={35} $bg={c.blue}>-inf</BlueField><BlueField $w={35} $bg={c.blue}>-inf</BlueField></SendsSlim>
      <Mixer $h={109} $pl={2} $pr={2}>
        <Strip>
          <PanSpace $pt={12}><BlueField $w={16} $bg="#263c70">C</BlueField></PanSpace>
          <TrackNumber $w={16}>{letter}</TrackNumber>
          <BlueField $w={16}>S</BlueField>
        </Strip>
        <Meter $w={17} $a={5} $b={9}>
          <MeterHandle $top width="11" height="11" viewBox="0 0 11 11"><path d="M1 5.5L10 0.5V10.5Z" fill="#5a6c98" stroke={c.navyLine} /></MeterHandle>
        </Meter>
      </Mixer>
    </Column>
  );
}

function MasterTrack() {
  return (
    <Column $w={79}>
      <TrackHead $bg="#1279d6"><span>&nbsp;Master</span></TrackHead>
      <Slots>
        {[1, 2, 3, 4, 5, 6, 7, 8].map((i) => (
          <SceneSlot key={i}><SceneName $sel={i === 1}><Tri w={9} h={10} color="#161a24" /></SceneName>{i}</SceneSlot>
        ))}
      </Slots>
      <Section $h={150} />
      <SceneTools $h={18}>
        <Counter $w={12}>.3</Counter>
        <Tile $w={15} $ml={23} $line $bg="#5d74a8"><Svg w={10} h={10}><path d="M1 0V10" stroke="#14244e" strokeWidth="2" /><path d="M4 1V9L7 5Z" fill="#14244e" /><path d="M9 3V7" stroke="#14244e" /></Svg></Tile>
        <Tile $w={21} $ml={2} $line $bg="#c8737c"><Svg w={16} h={8}><path d="M0 0L7 4L0 8Z" fill="#14244e" /><path d="M9 1H16M9 4H16M9 7H16" stroke="#14244e" strokeWidth="1.3" /></Svg></Tile>
      </SceneTools>
      <SceneTools $h={18}>
        <Tile $w={12} $bg={c.blue}><Tri color={c.blueText} w={9} h={11} /></Tile>
        <Gap $w={4} />
        <Counter $w={16}>.3</Counter>
        <Tile $w={15} $ml={4}><ArrowIcon dir="up" /></Tile>
        <Tile $w={15} $ml={3}><ArrowIcon dir="down" /></Tile>
        <Tile $w={3} $ml={4} $bg={c.navy} />
      </SceneTools>
      <IO $h={121}>
        <Gap $h={57} />
        <Label $h={15}>Cue Out</Label>
        <Dropdown pipe={6}>1/2</Dropdown>
        <Label $h={15} $mt={4} $lh={16}>Master Out</Label>
        <Dropdown pipe={6}>1/2</Dropdown>
      </IO>
      <MasterSends $h={57}>
        Sends
        <Wire $y={18} $w={6} /><Wire $y={36} $w={44} />
        <Post $x={8} $y={12}>Post</Post><Post $x={45} $y={30}>Post</Post>
      </MasterSends>
      <Mixer $h={109} $pl={10} $pr={4}>
        <Strip>
          <PanSpace $pt={2}><PanKnob /></PanSpace>
          <Gap $h={11} />
          <Solo>Solo</Solo>
          <CueKnob />
        </Strip>
        <Meter $w={26} $a={7} $b={13}>
          <MeterBadge $w={26}>./10</MeterBadge>
          <MeterHandle width="12" height="7" viewBox="0 0 12 7"><path d="M1 6.5L11 1V6.5Z" fill={c.blueSel} stroke={c.navyLine} /></MeterHandle>
        </Meter>
      </Mixer>
    </Column>
  );
}

const bar = (n) => 0.8 + (n - 1) * 14.392;
function PianoRoll() {
  const blocks = [
    [1, 17, "#3d3d3d"], [17, 33, "#484848"], [33, 49, "#3d3d3d"], [49, 50, "#484848"],
    [50, 65, "#363636"], [65, 81, "#2e2e2e"], [81, 97, "#363636"], [97, 100, "#2e2e2e"],
  ];
  const bx = (n) => (n === 50 ? 705 : n === 1 ? 0 : n === 100 ? 1416 : bar(n));
  const lines = Array.from({ length: 50 }, (_, i) => 1 + i * 2);
  const marks = Array.from({ length: 25 }, (_, i) => 1 + i * 4);
  return (
    <svg width="1416" height="203" viewBox="0 0 1416 203">
      {blocks.map(([a, b, f]) => <rect key={a} x={bx(a)} width={bx(b) - bx(a)} height="203" fill={f} />)}
      <rect x="0" y="18" width="705" height="25" fill="#3d3d3d" />
      <rect x="705" y="18" width="711" height="25" fill="#363636" />
      {[[61, 11], [93, 11], [115, 11], [147, 8]].map(([y, h]) => <rect key={y} y={y} width="1416" height={h} fill="#000" opacity=".09" />)}
      {lines.map((n) => <rect key={n} x={Math.round(bar(n))} y="18" width="1" height="185" fill="#262626" />)}
      <rect y="42" width="1416" height="19" fill="#282828" />
      {lines.map((n) => <rect key={n} x={Math.round(bar(n))} y="43" width="1" height="17" fill="#202020" />)}
      <rect y="42" width="1416" height="1" fill="#161616" /><rect y="60" width="1416" height="1" fill="#161616" />
      {lines.map((n) => <rect key={n} x={Math.round(bar(n))} y="16" width="1" height="2" fill="#777" />)}
      {marks.map((n) => (
        <g key={n}>
          <path d={`M${Math.round(bar(n)) + 0.5} 18V12.5H${Math.round(bar(n)) + 2}`} stroke="#777" fill="none" />
          <text x={bar(n) + 5} y="16" fontSize="10.8" fontWeight="500" fill="#a0a0a0">{n}</text>
        </g>
      ))}
      <rect x="0" y="18" width="705" height="12" fill="#b5b5b5" />
      <rect x="1" y="19" width="703" height="10" fill="#007bc0" />
      <path d="M1 19L10 24L1 29Z" fill="#555" stroke="#a8a8a8" />
      <path d="M1 31L10 36.5L1 42Z" fill="#555" stroke="#a8a8a8" />
      <path d="M704 19L696 24L704 29Z" fill="#555" stroke="#a8a8a8" />
      <path d="M704 31L696 36.5L704 42" stroke="#a8a8a8" fill="none" />
      <path d="M803.5 55.5H810.5L807 60.5Z" fill="#ff7c3a" />
      <rect y="125" width="704" height="11" fill="#04131d" />
      <rect x="1" y="127" width="702" height="7.5" fill="#0a76b2" />
      <rect y="155" width="1416" height="4" fill="#181818" />
      <rect y="169.5" width="705" height="1.2" fill="#1a1a1a" />
      <circle cx="4" cy="170" r="3.6" fill="#007bc0" stroke="#111" />
      <rect x="0" y="18" width="1" height="185" fill="#9c9c9c" />
      <rect x="704" y="18" width="1.3" height="185" fill="#9c9c9c" />
      <text x="1379" y="197" fontSize="18.5" fontWeight="400" fill="#191919">2/1</text>
    </svg>
  );
}

const Pos = ({ v }) =>
  v.map((x, i) => (
    <Digits key={i}>{x}{i < v.length - 1 || v.length === 2 ? <i>.</i> : null}</Digits>
  ));

export default function App() {
  return (
    <App_>
      <Global />
      <TitleBar>
        <LiveBadge>Live</LiveBadge>
        <Caption>{"khipu mapeado en ableton  [khipu mapeado en ableton] - Ableton Live 11 Suite"}</Caption>
        <WindowButtons>
          <Svg w={12} h={12}><path d="M0 5.5H12" stroke="#fff" /></Svg>
          <Svg w={12} h={12}><rect x=".5" y="2.5" width="9" height="9" rx="1.5" stroke="#fff" /><path d="M3 .5H9.5Q11.5 .5 11.5 2.5V9" stroke="#fff" /></Svg>
          <Svg w={12} h={12}><path d="M0 0L12 12M12 0L0 12" stroke="#fff" strokeWidth="1.2" /></Svg>
        </WindowButtons>
      </TitleBar>
      <MenuBar>
        <MenuItem $w={41}>File</MenuItem><MenuItem $w={44}>Edit</MenuItem><MenuItem $w={61}>Create</MenuItem>
        <MenuItem $w={50}>View</MenuItem><MenuItem $w={70}>Options</MenuItem><MenuItem $w={40}>Help</MenuItem>
      </MenuBar>

      <Toolbar>
        <Cell $w={24} $ml={0}>Ext</Cell>
        <SplitCell $w={8} $ml={2} />
        <Cell $w={28} $ml={3} $bg={c.navy} $fg={c.blueText}>Tap</Cell>
        <Tempo $w={45} $fg={c.blueText} $size={11.2}>120.00</Tempo>
        <Cell $w={18} $ml={3} $bg={c.navy}><NudgeBars /></Cell>
        <Cell $w={18} $bg={c.navy}><NudgeBars flip /></Cell>
        <Cell $w={45}>4&nbsp; /&nbsp; 4</Cell>
        <Cell $w={30} $ml={3} $bg={c.navy}>
          <Svg w={18} h={9}><circle cx="4" cy="4.5" r="3.2" stroke={c.blueText} strokeWidth="1.2" /><circle cx="13.5" cy="4.5" r="4" fill={c.blueText} /></Svg>
        </Cell>
        <Cell $w={13} $ml={0}><Caret w={6} h={4} /></Cell>
        <Cell $w={48} $bg={c.navy} $fg={c.blueText} $size={11.2}>1 Bar<Gap $w={10} /><Caret w={6} h={4} color={c.blueText} /></Cell>

        <Cell $w={23} $ml={318} $bg={c.tan}>
          <Svg w={16} h={10}><path d="M0 5H6M10 5H12M14 5H16" stroke="#1c2648" strokeWidth="1.6" /><path d="M4 1.5L9 5L4 8.5Z" fill="#1c2648" /></Svg>
        </Cell>
        <Position $w={88}><Pos v={["1", "1", "1"]} /></Position>
        <Cell $w={18} $ml={20} $bg={c.blue}><Tri w={14} h={15} color={c.blueText} /></Cell>
        <CountCell $w={19} $ml={6} $bg={c.navy}><Counter>.3</Counter></CountCell>
        <Cell $w={19} $ml={6} $bg={c.blue}><Svg w={15} h={15}><circle cx="7.5" cy="7.5" r="7.2" fill={c.blueText} /></Svg></Cell>
        <Cell $w={18} $ml={19} $bg={c.navy}><Svg w={11} h={11}><path d="M5.5 0V11M0 5.5H11" stroke={c.blueText} strokeWidth="1.4" /></Svg></Cell>
        <Cell $w={19} $bg={c.navy}><Automation color={c.blueText} /></Cell>
        <Cell $w={18} $bg={c.navy}><ArrowIcon dir="left" color="#5a6fa5" /></Cell>
        <Cell $w={18} $bg={c.navy}><Svg w={11} h={11}><path d="M.7 3.5V.7H3.5M7.5 .7H10.3V3.5M10.3 7.5V10.3H7.5M3.5 10.3H.7V7.5" stroke="#5a6fa5" strokeWidth="1.3" /></Svg></Cell>
        <Cell $w={19} $bg={c.navy}><Svg w={11} h={11}><circle cx="5.5" cy="5.5" r="4.6" stroke={c.blueText} strokeWidth="1.4" /></Svg></Cell>
        <Cell $w={31} $bg={c.navy} $fg="#5267a0" $size={11}>New</Cell>
        <Position $w={88} $ml={25}><Pos v={["5", "1", "1"]} /></Position>
        <Cell $w={23} $bg={c.navy}><Svg w={14} h={10}><path d="M0 1H4L9 9H14" stroke={c.blueText} strokeWidth="1.4" /></Svg></Cell>
        <Cell $w={23} $bg={c.navy}><LoopIcon color={c.blueText} /></Cell>
        <Cell $w={23} $bg={c.navy}><Svg w={14} h={10}><path d="M0 9H5L9 1H14" stroke={c.blueText} strokeWidth="1.4" /></Svg></Cell>
        <Position $w={88}><Pos v={["636", "0", "0"]} /></Position>

        <Cell $w={18} $ml={434} $bg={c.navy}>
          <Svg w={13} h={14}><path d="M1 13H12.5" stroke={c.blueText} strokeWidth="1.3" /><path d="M1.5 10.5L2.5 7.5L8.5 1.5L11 4L5 10Z" fill={c.blueText} /></Svg>
        </Cell>
        <Cell $w={19} $bg={c.orange}>
          <Svg w={13} h={13}><rect x=".6" y=".6" width="11.8" height="11.8" stroke="#1b1208" strokeWidth="1.2" /><path d="M3.8 0V7M6.5 0V7M9.2 0V7" stroke="#1b1208" strokeWidth="1.7" /><path d="M3.8 7V12M6.5 7V12M9.2 7V12" stroke="#1b1208" strokeWidth=".8" /></Svg>
        </Cell>
        <Cell $w={28} $weight={600} $size={11}>Key</Cell>
        <SplitCell $w={8} />
        <Cell $w={30} $ml={3} $bg="#3f76ff" $fg="#0d1f4d">MIDI</Cell>
        <Cell $w={62} $weight={600} $size={11}><Gap $w={13} />2 %<Gap $w={20} /><Caret w={6} h={4} /></Cell>
        <Cell $w={33} />
        <SplitCell $w={8} />
      </Toolbar>

      <Main>
        <Browser>
          <BrowserTop>
            <Round><Tri w={10} h={12} color="#454545" /></Round>
            <BrowserTitle><div>MIDI Mappings</div></BrowserTitle>
          </BrowserTop>
          <TableFrame>
            <Table>
              <HeadRow>
                <span>C..</span>
                <span>Note/Control<Svg w={12} h={8}><path d="M4 0L8 8H0Z" fill="#555" /></Svg></span>
                <span>Path</span><span>Name</span><span>Min</span><span>Max</span>
              </HeadRow>
              {mappings.map(([note, path, name, min, max], i) => (
                <Row key={i}>
                  <span>1</span><span>{note}</span><span>{path}</span><span>{name}</span>
                  {min && <Value $fill={min[1]}>{min[0]}</Value>}
                  {max && <Value $w={51} $fill={max[1]}>{max[0]}</Value>}
                </Row>
              ))}
            </Table>
          </TableFrame>
          <BrowserBottom>
            <Round $mt={5}><Svg w={14} h={10}><path d="M1 4Q4 0 7 3T13 2M1 9Q4 5 7 8T13 7" stroke="#333" strokeWidth="1.4" /></Svg></Round>
            <PreviewBar />
          </BrowserBottom>
        </Browser>

        <Session>
          <Tracks>
            {tracks.map((t) => <Track key={t.n} t={t} />)}
            <DropArea>Drop Files and Devices Here</DropArea>
            <ReturnTrack letter="A" name="Rev" bg="#14a5c9" line="#10b4b4" ml={1} />
            <ReturnTrack letter="B" name="Del" bg="#2fd3c3" line="#2ff0a6" />
            <MasterTrack />
          </Tracks>
          <Rail>
            <RailTop>
              <Round><Svg w={12} h={11}><path d="M0 1H12M0 5.5H12M0 10H12" stroke="#555" strokeWidth="1.6" /></Svg></Round>
              <Round><Svg w={12} h={12}><path d="M1.5 0V12M6 0V12M10.5 0V12" stroke={c.orange} strokeWidth="2" /></Svg></Round>
            </RailTop>
            <RailBody>
              <Toggle $on>I·O</Toggle>
              <Toggle $on $h={13} $mb={1} $r="7px 7px 0 0">S</Toggle>
              <Toggle $on $h={13} $r="0 0 7px 7px">R</Toggle>
              <Toggle $on>M</Toggle>
              <Toggle>D</Toggle><Toggle>X</Toggle><Toggle>C</Toggle>
            </RailBody>
          </Rail>
        </Session>
      </Main>

      <ClipView>
        <ClipProps>
          <ClipTitle><i />17-Glas Filtered Verb Noise 1</ClipTitle>
          <Panes>
            <Pane>
              <Tabs>
                <Tab $w={90} $on><Svg w={10} h={10}><rect x=".6" y=".6" width="8.8" height="8.8" stroke={c.text} strokeWidth="1.2" /><path d="M3.5 2.2L7.5 5L3.5 7.8Z" fill={c.text} /></Svg></Tab>
                <Tab $w={91} $ml={2}><Svg w={10} h={10}><path d="M1 0V10" stroke="#6a6a6a" strokeWidth="1.6" /><path d="M3.5 1.5V8.5L6.5 5Z" fill="#6a6a6a" /><path d="M8.5 3.5V6.5" stroke="#6a6a6a" /></Svg></Tab>
              </Tabs>
              <PaneBody>
                <Line $h={15}><Half>Start<SetPill>Set</SetPill></Half><Half>End<SetPill>Set</SetPill></Half></Line>
                <Line $mt={4}><NumField><Pos v={["1", "1", "1"]} /></NumField><NumField $hi><Pos v={["49", "4", "3"]} /></NumField></Line>
                <Rule />
                <LoopBtn><LoopIcon color="#1c2648" w={11} h={11} />Loop</LoopBtn>
                <Line $h={15} $mt={4}><Half>Position<SetPill>Set</SetPill></Half><Half>Length<SetPill>Set</SetPill></Half></Line>
                <Line $mt={4}><NumField><Pos v={["1", "1", "1"]} /></NumField><NumField><Pos v={["48", "3"]} /><em>2</em></NumField></Line>
                <Rule />
                <Line $mt={5}>
                  <Half>Signature</Half>
                  <Half>Groove
                    <Duo>
                      <MiniRound><Svg w={10} h={8}><path d="M1 4.5A3 3 0 0 1 6 1.5M9 3.5A3 3 0 0 1 4 6.5" stroke={c.text} strokeWidth="1.2" /><path d="M5 0L8 2L5 3.5ZM5 4.5L2 6L5 8Z" fill={c.text} /></Svg></MiniRound>
                      <MiniRound><ArrowIcon color={c.text} /></MiniRound>
                    </Duo>
                  </Half>
                </Line>
                <Line $mt={4}><Half><Field $w={38}>4</Field>/<Field $w={38}>4</Field></Half><Field $w={82} $align="flex-start">None</Field></Line>
                <Rule />
                <Line $mt={4}>
                  <Field $w={40} $bg="#424242">Scale</Field>
                  <Field $w={46} $bg={c.panel} $align="flex-end"><Caret color="#7a7a7a" /></Field>
                  <Field $w={74} $bg={c.panel} $align="flex-end"><Caret color="#7a7a7a" /></Field>
                </Line>
              </PaneBody>
            </Pane>
            <Pane>
              <Tabs>
                <Tab $w={59} $on><Svg w={10} h={11}><path d="M3 9V1.5L9 .7V8" stroke={c.text} strokeWidth="1.5" /><path d="M3 3L9 2" stroke={c.text} strokeWidth="1.5" /><circle cx="2" cy="9.2" r="1.7" fill={c.text} /><circle cx="7.8" cy="8.4" r="1.7" fill={c.text} /></Svg></Tab>
                <Tab $w={59} $ml={2}><Svg w={10} h={9}><path d="M2 7L8 2" stroke="#777" strokeWidth="1.5" /><circle cx="8" cy="2" r="2" fill="#777" /><circle cx="2" cy="7" r="2" fill="#777" /></Svg></Tab>
                <Tab $w={61} $ml={2}><Svg w={11} h={9}><path d="M2 2L5.5 7L9 2" stroke="#777" strokeWidth="1.4" /><circle cx="2" cy="2" r="1.7" fill="#777" /><circle cx="9" cy="2" r="1.7" fill="#777" /><circle cx="5.5" cy="7" r="1.8" fill="#777" /></Svg></Tab>
              </Tabs>
              <PaneBody>
                <Line $h={15}>Notes</Line>
                <Line $mt={4}><Field $w={168}>C-1</Field></Line>
                <Rule />
                <Line $mt={4}><Pill $w={82}>÷2</Pill><Pill $w={82}>×2</Pill></Line>
                <Line $mt={5}><Pill $w={82}>Reverse</Pill><Pill $w={82}>Invert</Pill></Line>
                <Line $mt={4}><Pill $w={82}>Legato</Pill><Pill $w={82}>Duplicate</Pill></Line>
                <Rule />
                <Line $mt={5}><Pill $w={82}>Randomize</Pill><Field $w={82} $bg={c.teal}>127</Field></Line>
                <Rule />
                <Line $mt={4}>Velocity Range
                  <Field $w={82} $align="space-between"><Gap $w={7} />0<Svg w={7} h={10}><path d="M7 0V10L0 5Z" fill="#4a4a4a" /></Svg></Field>
                </Line>
              </PaneBody>
            </Pane>
          </Panes>
        </ClipProps>

        <RollSide>
          <RollTop><BlueField $w={49}>Fold</BlueField><BlueField $w={49} $bg={c.blue} $dim>Scale</BlueField></RollTop>
          <RollLower>
            <RollTools>
              <Tile $w={14}><Headphones /></Tile><Gap $h={4} />
              <Tile $w={14}><ArrowIcon dir="left" /></Tile><Gap $h={2} />
              <Tile $w={14}><ArrowIcon /></Tile><Gap $h={32} />
              <MiniRound $bg={c.orange}><Svg w={9} h={4}><circle cx="2" cy="2" r="2" fill="#1b1208" /><path d="M2 2H9" stroke="#1b1208" strokeWidth="1.3" /></Svg></MiniRound><Gap $h={5} />
              <MiniRound><Svg w={9} h={4}><circle cx="2" cy="2" r="1.8" fill={c.text} /><path d="M5 2H6M7 2H8" stroke={c.text} /></Svg></MiniRound><Gap $h={10} />
              <MiniRound><Tri w={7} h={8} /></MiniRound>
            </RollTools>
            <KeysWrap>
              <KeysRow>
                <KeyLabel>C-1</KeyLabel>
                <Keys>
                  {[[11, 1], [10, 0], [11, 0], [11, 1], [11, 0], [10, 1], [11, 0], [11, 0], [8, 1]].map(([h, b], i) => <PianoKey key={i} $h={h} $black={b} />)}
                </Keys>
              </KeysRow>
              <VelocitySide>
                Velocity
                <Scale><div><span>127</span><span>1</span></div><Svg w={7} h={40}><path d="M0 2.5H6V37.5H0M3.5 20H6" stroke={c.text} strokeWidth="1.3" /></Svg></Scale>
              </VelocitySide>
            </KeysWrap>
          </RollLower>
        </RollSide>
        <PianoRoll />
      </ClipView>

      <Status>
        <Round $mt={10}><Tri w={12} h={12} color="#3d3d3d" /></Round>
        <StatusText>Downloading Live 11.3.10 - You'll be notified when the update is ready. <u>Click here for release notes.</u></StatusText>
        <Overview><OverviewFrame /></Overview>
        <TrackTag>
          pad lleno
          <Svg w={21} h={16}><rect width="21" height="16" fill="#333" /><path d="M1 1H20" stroke="#4a6470" /><path d="M1 3.5H20" stroke="#cfcfcf" strokeWidth="3" strokeDasharray="3.5 1" /><path d="M1 9.5H20M1 13.5H20" stroke="#777" strokeWidth="1.6" strokeDasharray="4 1.3" /></Svg>
        </TrackTag>
        <Gap $w={9} />
        <Round $mt={10}><Svg w={12} h={12}><path d="M6 0L12 12H0Z" fill="#3d3d3d" /></Svg></Round>
      </Status>

      <Taskbar>
        <Start>
          <Svg w={29} h={29}>
            <defs><linearGradient id="win" x1="0" y1="0" x2="1" y2="1"><stop offset="0" stopColor="#7fe0ff" /><stop offset="1" stopColor="#0f8df5" /></linearGradient></defs>
            <path d="M0 0H14V14H0ZM15 0H29V14H15ZM0 15H14V29H0ZM15 15H29V29H15Z" fill="url(#win)" />
          </Svg>
        </Start>
        <Search>
          <Svg w={19} h={20}><circle cx="8" cy="8" r="6.7" stroke="#e8e8e8" strokeWidth="2" /><path d="M12.8 13L18 18.6" stroke="#e8e8e8" strokeWidth="2.2" /></Svg>
          Búsqueda
        </Search>
        <TaskIcons>
          <Task><Svg w={30} h={30}><rect x="8" y="1" width="22" height="20" fill="#f1f1f1" /><rect x="0" y="9" width="23" height="20" fill="#6b6b6b" /><rect x="8" y="9" width="15" height="12" fill="#a9a9a9" /></Svg></Task>
          <Task $open><Svg w={30} h={30}><path d="M0 4Q0 2 2 2H10L13 5H30V28H0Z" fill="#e0a116" /><path d="M0 7H11L14 5H30V28.5H0Z" fill="#ffd04d" /><path d="M5 29V24Q5 21 8 21H22Q25 21 25 24V29Z" fill="#1280d0" /><path d="M9 25H21" stroke="#0a4f8c" strokeWidth="1.5" /></Svg></Task>
          <Task $open><Chrome /></Task>
          <Task>
            <Svg w={30} h={30}><path d="M2 28L4 21.2A13 13 0 1 1 8.8 26Z" stroke="#25d366" strokeWidth="3" strokeLinejoin="round" /><path d="M10.3 8.2Q11.6 7.4 12.2 8.6L13.4 11.3Q13.5 12 12.2 13.3Q14 16.6 17.3 18Q18.6 16.3 19.3 16.6L22 18Q22.4 19.8 20.6 21Q18.4 22 15 20.2Q10.5 17.6 9 13.6Q8 10 10.3 8.2Z" fill="#25d366" /></Svg>
          </Task>
          <Task $open>
            <svg width="30" height="30" viewBox="0 0 30 30" overflow="visible">
              <Chrome />
              <circle cx="25.5" cy="4" r="10.5" fill="#060606" />
              <path d="M26 -4Q21 -2 24 3T24 12" stroke="#c8c8c8" strokeWidth="2.2" fill="none" />
              <path d="M27 -3Q24 1 27 5T26 11" stroke="#6b6b6b" fill="none" />
            </svg>
          </Task>
          <Task $open>
            <svg width="30" height="30" viewBox="0 0 30 30">
              <path d="M7 1H29V8H7Z" fill="#41a5ee" /><path d="M7 8H29V15H7Z" fill="#2b7cd3" /><path d="M7 15H29V22H7Z" fill="#185abd" /><path d="M7 22H29V29H7Z" fill="#103f91" />
              <rect x="0" y="7" width="15" height="16" rx="1.5" fill="#1a55b5" />
              <text x="7.5" y="19" textAnchor="middle" fontSize="11.5" fontWeight="700" fill="#fff">W</text>
            </svg>
          </Task>
          <Task $active><LiveIcon>Live</LiveIcon></Task>
        </TaskIcons>
        <Tray>
          <Svg w={14} h={9}><path d="M1 8L7 2L13 8" stroke="#fff" strokeWidth="2" /></Svg>
          <Gap $w={28} />
          <Lang>ESP</Lang>
          <Svg w={20} h={20}><path d="M1 6H3L5.5 8.7H8.5L6 1.5H8.5L13 8.5H17Q19 8.8 19 10T17 11.5H13L8.5 18.5H6L8.5 11.3H5.5L3 14H1L2.2 10Z" stroke="#fff" strokeWidth="1.4" strokeLinejoin="round" /></Svg>
          <Gap $w={9} />
          <Svg w={21} h={18}><path d="M1 6.5H4.5L9 2.5V15.5L4.5 11.5H1Z" stroke="#fff" strokeWidth="1.4" strokeLinejoin="round" /><path d="M11.5 6Q13 9 11.5 12" stroke="#fff" strokeWidth="1.4" /><path d="M14 3.5Q17 9 14 14.5M17 1.5Q21 9 17 16.5" stroke="#777" strokeWidth="1.3" /></Svg>
          <Gap $w={10} />
          <Svg w={21} h={18}><rect x="1.5" y="4" width="16" height="11.5" rx="2.5" stroke="#fff" strokeWidth="1.4" /><rect x="3.8" y="6.2" width="11.5" height="7.2" fill="#fff" /><path d="M18 8H20.5V12H18Z" fill="#fff" /><path d="M4 -1L-.5 5.5H2.5L1.5 9.5L7.5 3.5H4.5Z" fill="#fff" stroke="#202020" strokeWidth=".7" /></Svg>
          <Clock>17:07<br />14/04/2024</Clock>
          <Svg w={20} h={21}><path d="M2 15V8Q2 2 8 2Q11 2 12.5 3.5V8H14V15L16 17H0Z" fill="#fff" /><path d="M5 18H11Q8 21.5 5 18Z" fill="#fff" /><path d="M5.5 7.5H10L5.5 12.5H10" stroke="#202020" strokeWidth="1.4" /><path d="M12.5 2H17L12.5 7H17" stroke="#fff" strokeWidth="1.3" /></Svg>
        </Tray>
      </Taskbar>
    </App_>
  );
}
